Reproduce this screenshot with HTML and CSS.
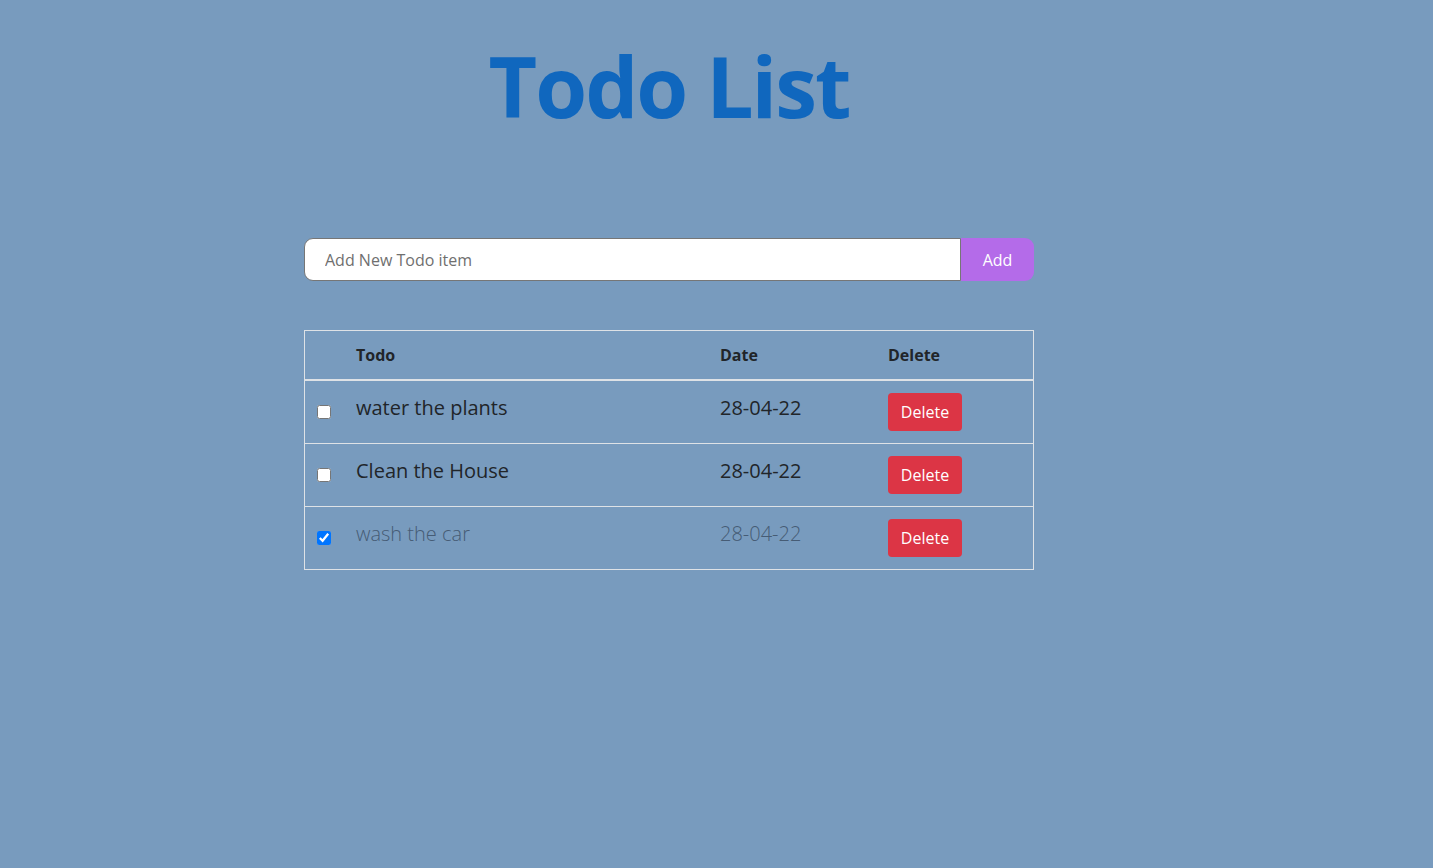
FILE: index.html
```html
<!DOCTYPE html>
<html lang="en">
<head>
<meta charset="utf-8">
<title>Todo List</title>
<link rel="stylesheet" href="styles.css">
</head>
<body>
<main class="app">
  <h1 class="title">Todo List</h1>
  <form class="add-form">
    <input class="add-input" type="text" placeholder="Add New Todo item">
    <button class="add-btn" type="button">Add</button>
  </form>
  <table class="todo-table">
    <thead>
      <tr>
        <th class="col-check"></th>
        <th class="col-todo">Todo</th>
        <th class="col-date">Date</th>
        <th class="col-del">Delete</th>
      </tr>
    </thead>
    <tbody>
      <tr>
        <td class="col-check"><input type="checkbox"></td>
        <td class="col-todo">water the plants</td>
        <td class="col-date">28-04-22</td>
        <td class="col-del"><button class="del-btn" type="button">Delete</button></td>
      </tr>
      <tr>
        <td class="col-check"><input type="checkbox"></td>
        <td class="col-todo">Clean the House</td>
        <td class="col-date">28-04-22</td>
        <td class="col-del"><button class="del-btn" type="button">Delete</button></td>
      </tr>
      <tr class="done">
        <td class="col-check"><input type="checkbox" checked></td>
        <td class="col-todo">wash the car</td>
        <td class="col-date">28-04-22</td>
        <td class="col-del"><button class="del-btn" type="button">Delete</button></td>
      </tr>
    </tbody>
  </table>
</main>
</body>
</html>
```
FILE: styles.css
```css
html, body {
  margin: 0;
  padding: 0;
}
body {
  background: #789bbe;
  font-family: "Open Sans", "Liberation Sans", sans-serif;
  color: #212529;
  min-height: 868px;
}
.app {
  width: 730px;
  margin-left: 304px;
  padding-top: 36px;
}
.title {
  margin: 0;
  text-align: center;
  font-size: 84px;
  font-weight: 700;
  line-height: 1.2;
  color: #1067be;
  letter-spacing: -2px;
}
.add-form {
  display: flex;
  margin-top: 101px;
  height: 43px;
}
.add-input {
  flex: 1;
  box-sizing: border-box;
  height: 43px;
  margin: 0;
  border: 1px solid #767676;
  border-radius: 9px 0 0 9px;
  padding: 1px 20px 0;
  font-family: "Open Sans", "Liberation Sans", sans-serif;
  font-size: 16px;
  color: #212529;
  background: #fff;
  outline: none;
}
.add-input::placeholder {
  color: #6f6f6f;
}
.add-btn {
  width: 73px;
  height: 43px;
  margin: 0;
  border: none;
  border-radius: 0 9px 9px 0;
  background: #b46be9;
  color: #fff;
  font-family: "Open Sans", "Liberation Sans", sans-serif;
  font-size: 16px;
  padding: 2px 0 0;
}
.todo-table {
  width: 730px;
  margin-top: 49px;
  border-collapse: collapse;
  border: 1px solid #dee2e6;
}
.todo-table th,
.todo-table td {
  padding: 12px 8px;
  text-align: left;
  vertical-align: top;
}
.todo-table th {
  font-size: 16px;
  font-weight: 700;
  line-height: 24px;
  border-bottom: 2px solid #dee2e6;
}
.todo-table td {
  font-size: 20px;
  line-height: 30px;
  border-bottom: 1px solid #dee2e6;
}
.col-check { width: 27px; }
.col-todo { width: 348px; }
.col-date { width: 152px; }
.todo-table td.col-check {
  vertical-align: middle;
  padding: 0 8px;
}
.todo-table td.col-check input {
  width: 14px;
  height: 14px;
  margin: 0 3px 0 4px;
  display: block;
}
.done td {
  color: #465c75;
  font-weight: 300;
}
.del-btn {
  display: block;
  width: 74px;
  height: 38px;
  border: none;
  border-radius: 4px;
  background: #dc3545;
  color: #fff;
  font-family: "Open Sans", "Liberation Sans", sans-serif;
  font-size: 16px;
  font-weight: 400;
  padding: 0;
}
```
